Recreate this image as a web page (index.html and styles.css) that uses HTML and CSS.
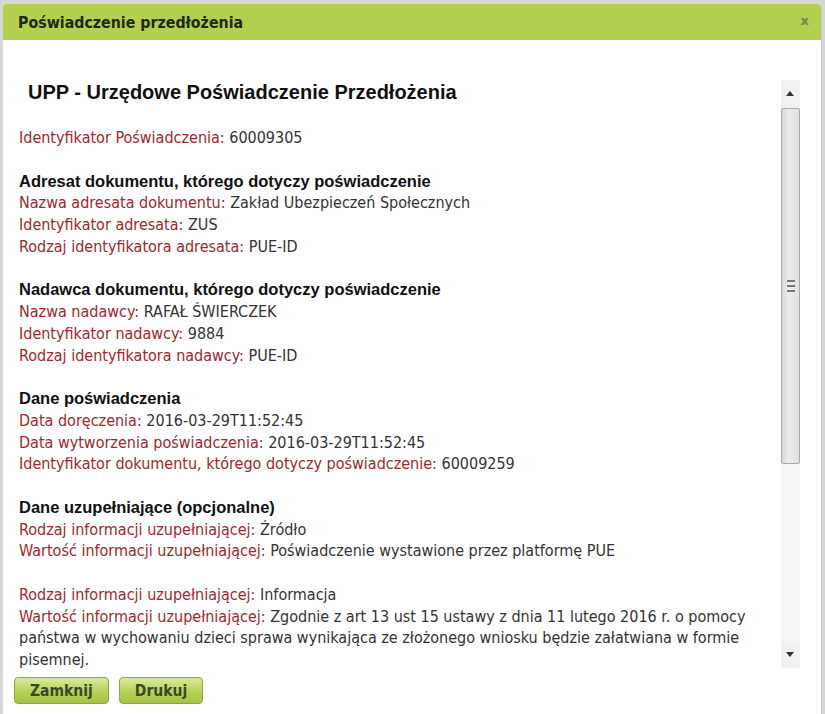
FILE: index.html
```html
<!doctype html>
<html>
	<head>
		<title>Poświadczenie przedłożenia</title>
		<meta charset="utf-8" />
		<link rel="stylesheet" href="styles.css">
	</head>
	<body>
		<div id="dialog">
			<div id="titlebar">
				<span class="title">Poświadczenie przedłożenia</span>
				<span class="close">x</span>
			</div>
			<div id="pane">
				<div id="content">
					<h1>UPP - Urzędowe Poświadczenie Przedłożenia</h1>

					<div class="row"><span class="lbl">Identyfikator Poświadczenia:</span> 60009305</div>

					<div class="section">
						<h2>Adresat dokumentu, którego dotyczy poświadczenie</h2>
						<div class="row"><span class="lbl">Nazwa adresata dokumentu:</span> Zakład Ubezpieczeń Społecznych</div>
						<div class="row"><span class="lbl">Identyfikator adresata:</span> ZUS</div>
						<div class="row"><span class="lbl">Rodzaj identyfikatora adresata:</span> PUE-ID</div>
					</div>

					<div class="section">
						<h2>Nadawca dokumentu, którego dotyczy poświadczenie</h2>
						<div class="row"><span class="lbl">Nazwa nadawcy:</span> RAFAŁ ŚWIERCZEK</div>
						<div class="row"><span class="lbl">Identyfikator nadawcy:</span> 9884</div>
						<div class="row"><span class="lbl">Rodzaj identyfikatora nadawcy:</span> PUE-ID</div>
					</div>

					<div class="section">
						<h2>Dane poświadczenia</h2>
						<div class="row"><span class="lbl">Data doręczenia:</span> 2016-03-29T11:52:45</div>
						<div class="row"><span class="lbl">Data wytworzenia poświadczenia:</span> 2016-03-29T11:52:45</div>
						<div class="row"><span class="lbl">Identyfikator dokumentu, którego dotyczy poświadczenie:</span> 60009259</div>
					</div>

					<div class="section">
						<h2>Dane uzupełniające (opcjonalne)</h2>
						<div class="row"><span class="lbl">Rodzaj informacji uzupełniającej:</span> Źródło</div>
						<div class="row"><span class="lbl">Wartość informacji uzupełniającej:</span> Poświadczenie wystawione przez platformę PUE</div>
					</div>

					<div class="section">
						<div class="row"><span class="lbl">Rodzaj informacji uzupełniającej:</span> Informacja</div>
						<div class="row"><span class="lbl">Wartość informacji uzupełniającej:</span> Zgodnie z art 13 ust 15 ustawy z dnia 11 lutego 2016 r. o pomocy państwa w wychowaniu dzieci sprawa wynikająca ze złożonego wniosku będzie załatwiana w formie pisemnej.</div>
					</div>
				</div>
				<div id="scrollbar">
					<div class="arrow up"></div>
					<div class="thumb"><div class="grip"></div></div>
					<div class="track"></div>
					<div class="arrow down"></div>
				</div>
			</div>
			<div id="buttons">
				<button class="btn">Zamknij</button>
				<button class="btn">Drukuj</button>
			</div>
		</div>
	</body>
</html>
```

FILE: styles.css
```css
body {
	margin: 0;
	background-color: #d6d6d6;
	font-family: "DejaVu Sans Condensed", "DejaVu Sans", sans-serif;
}

#dialog {
	margin: 4px 3px 0 3px;
	height: 710px;
	background-color: white;
	border-right: 1px solid #c8c8c8;
	border-radius: 4px 4px 0 0;
	display: flex;
	flex-direction: column;
}

#titlebar {
	height: 36px;
	background-color: #b3cf4f;
	border-radius: 4px 4px 0 0;
	display: flex;
	align-items: center;
	justify-content: space-between;
	padding: 0 12px 0 15px;
}

.title {
	font-weight: bold;
	font-size: 15.8px;
	color: #1e2a10;
}

.close {
	font-family: "DejaVu Sans", sans-serif;
	font-weight: bold;
	font-size: 13px;
	color: #6f8c4a;
	margin-top: -4px;
}

#pane {
	margin-top: 40px;
	height: 588px;
	display: flex;
}

#content {
	width: 762px;
	padding-left: 16px;
	overflow: hidden;
	font-size: 16px;
	line-height: 21.75px;
	color: #333;
}

h1 {
	font-family: "Liberation Sans", sans-serif;
	font-size: 20px;
	line-height: 24px;
	color: #111;
	margin: 0 0 23px 9px;
}

h2 {
	font-family: "Liberation Sans", sans-serif;
	font-size: 16.5px;
	line-height: 21.75px;
	color: #111;
	margin: 0;
}

.section {
	margin-top: 21.75px;
}

.lbl {
	color: #a3262b;
}

#scrollbar {
	width: 19px;
	display: flex;
	flex-direction: column;
	background-color: #f3f3f3;
}

.arrow {
	height: 27px;
	position: relative;
	background-color: #f1f1f1;
}

.arrow::after {
	content: "";
	position: absolute;
	left: 5px;
	border-left: 4px solid transparent;
	border-right: 4px solid transparent;
}

.up::after {
	top: 11px;
	border-bottom: 5px solid #333;
}

.down::after {
	top: 11px;
	border-top: 5px solid #333;
}

.thumb {
	height: 354px;
	margin: 1px 0;
	border: 1px solid #aaa;
	border-radius: 2px;
	background: linear-gradient(to right, #d8d8d8, #ececec 40%, #e0e0e0);
	display: flex;
	align-items: center;
	justify-content: center;
}

.grip {
	width: 8px;
	height: 8px;
	border-top: 2px solid #777;
	border-bottom: 2px solid #777;
	position: relative;
}

.grip::after {
	content: "";
	position: absolute;
	left: 0;
	right: 0;
	top: 3px;
	border-top: 2px solid #777;
}

.track {
	flex: 1;
	background-color: #f6f6f6;
}

#buttons {
	display: flex;
	gap: 10px;
	padding: 9px 0 0 11px;
}

.btn {
	font-family: "DejaVu Sans Condensed", "DejaVu Sans", sans-serif;
	font-weight: bold;
	font-size: 15.5px;
	color: #3b4a26;
	height: 27px;
	padding: 0 15px;
	border: 1px solid #8ea34a;
	border-radius: 4px;
	background: linear-gradient(to bottom, #dbeaa0, #b7d159 55%, #a6c243);
}
```
